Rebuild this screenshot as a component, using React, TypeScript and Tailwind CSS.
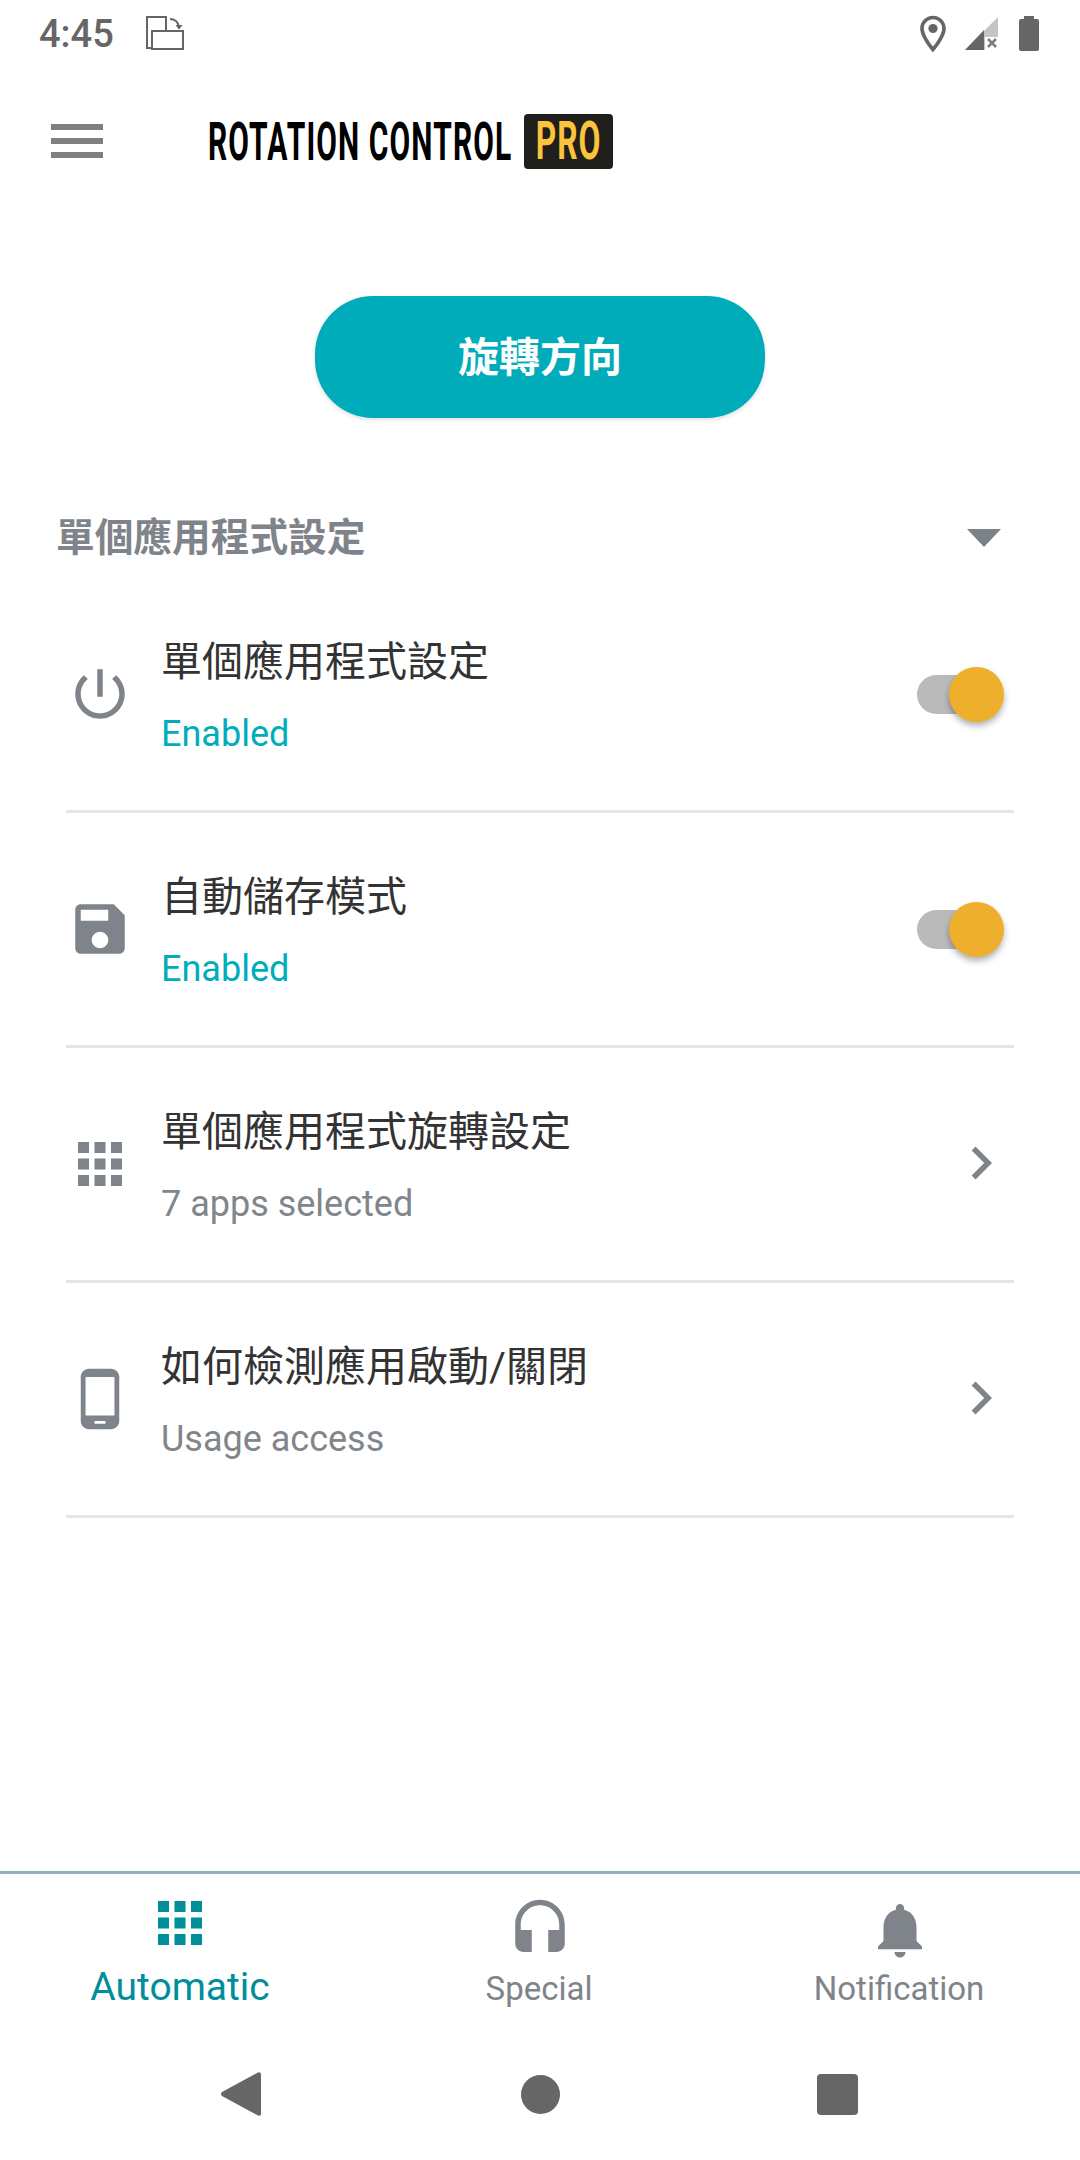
import type { ReactNode } from 'react'

const FONT = "font-['Roboto','Noto_Sans_CJK_TC',sans-serif]"

function Icon({ d, className, children }: { d?: string; className: string; children?: ReactNode }) {
  return (
    <svg viewBox="0 0 24 24" className={className} fill="currentColor">
      {d && <path d={d} />}
      {children}
    </svg>
  )
}

const APPS =
  'M4 8h4V4H4v4zm6 12h4v-4h-4v4zm-6 0h4v-4H4v4zm0-6h4v-4H4v4zm6 0h4v-4h-4v4zm6-10v4h4V4h-4zm-6 4h4V4h-4v4zm6 6h4v-4h-4v4zm0 6h4v-4h-4v4z'
const POWER =
  'M13 3h-2v10h2V3zm4.83 2.17l-1.42 1.42C17.99 7.86 19 9.81 19 12c0 3.87-3.13 7-7 7s-7-3.13-7-7c0-2.19 1.01-4.14 2.58-5.42L6.17 5.17C4.23 6.82 3 9.26 3 12c0 4.97 4.03 9 9 9s9-4.03 9-9c0-2.74-1.23-5.18-3.17-6.83z'
const SAVE =
  'M17 3H5c-1.11 0-2 .9-2 2v14c0 1.1.89 2 2 2h14c1.1 0 2-.9 2-2V7l-4-4zm-5 16c-1.66 0-3-1.34-3-3s1.34-3 3-3 3 1.34 3 3-1.34 3-3 3zm3-10H5V5h10v4z'
const PHONE =
  'M16 1H8C6.34 1 5 2.34 5 4v16c0 1.66 1.34 3 3 3h8c1.66 0 3-1.34 3-3V4c0-1.66-1.34-3-3-3zm-2 20h-4v-1h4v1zm3.25-3H6.75V4h10.5v14z'
const CHEVRON = 'M8.59 16.59L13.17 12 8.59 7.41 10 6l6 6-6 6-1.41-1.41z'
const HEADSET =
  'M12 1c-4.97 0-9 4.03-9 9v7c0 1.66 1.34 3 3 3h3v-8H5v-2c0-3.87 3.13-7 7-7s7 3.13 7 7v2h-4v8h3c1.66 0 3-1.34 3-3v-7c0-4.97-4.03-9-9-9z'
const BELL =
  'M12 22c1.1 0 2-.9 2-2h-4c0 1.1.89 2 2 2zm6-6v-5c0-3.07-1.64-5.64-4.5-6.32V4c0-.83-.67-1.5-1.5-1.5s-1.5.67-1.5 1.5v.68C7.63 5.36 6 7.92 6 11v5l-2 2v1h16v-1l-2-2z'

function StatusBar() {
  return (
    <div className="h-[63px] flex items-center pl-[39px] pr-[41px] text-[#666666]">
      <span className="text-[38px] leading-[63px] font-medium mt-[5px]">4:45</span>
      {/* auto-rotate indicator */}
      <svg viewBox="0 0 38 34" className="w-[38px] h-[34px] ml-[32px] mt-[3px]" fill="none" stroke="currentColor" strokeWidth="2">
        <path d="M5 32H1V1h19v14" />
        <rect x="6" y="15" width="31" height="18" />
        <path d="M24 3c5 0 8 3 9 8" />
        <path d="M30 9l3 4 3-4" fill="currentColor" strokeWidth="1" />
      </svg>
      <div className="ml-auto flex items-center">
        <svg viewBox="0 0 24 24" className="w-[44px] h-[44px] mt-[4px]" fill="currentColor">
          <path d="M12 2C8.13 2 5 5.13 5 9c0 5.25 7 13 7 13s7-7.75 7-13c0-3.87-3.13-7-7-7zM7 9c0-2.76 2.24-5 5-5s5 2.24 5 5c0 2.88-2.88 7.19-5 9.88C9.92 16.21 7 11.85 7 9z" />
          <circle cx="12" cy="9" r="2.5" />
        </svg>
        <svg viewBox="0 0 33 33" className="w-[33px] h-[33px] ml-[10px] mt-[4px]">
          <path d="M33 0V20H20V33H0Z" fill="#c4c4c4" />
          <path d="M19 13V33H0Z" fill="#666666" />
          <path d="M23 22l8 8M31 22l-8 8" stroke="#808080" strokeWidth="2.6" />
        </svg>
        <svg viewBox="0 0 20 35" className="w-[20px] h-[35px] ml-[21px] mt-[3px]" fill="currentColor">
          <path d="M5 0h10v3h3a2 2 0 0 1 2 2v28a2 2 0 0 1-2 2H2a2 2 0 0 1-2-2V5a2 2 0 0 1 2-2h3z" />
        </svg>
      </div>
    </div>
  )
}

function Header() {
  return (
    <div className="h-[156px] flex items-center pl-[51px]">
      <div className="w-[52px] flex flex-col gap-[8px]">
        <div className="h-[6px] bg-[#7f7f7f]" />
        <div className="h-[6px] bg-[#7f7f7f]" />
        <div className="h-[6px] bg-[#7f7f7f]" />
      </div>
      <div className="ml-[105px] flex items-center">
        {/* logo wordmark: squeezed, the inner box keeps its unscaled width */}
        <div className="w-[304px] pt-[2px]">
          <span className="block w-[540px] text-[53px] leading-none font-bold tracking-[2px] text-black whitespace-nowrap origin-left scale-x-[0.565]">
            ROTATION CONTROL
          </span>
        </div>
        <div className="ml-[12px] w-[89px] h-[55px] rounded-[4px] bg-[#211f1c] flex items-center justify-center">
          <span className="text-[53px] leading-none font-bold tracking-[1.5px] text-[#fbc43c] scale-x-[0.6]">PRO</span>
        </div>
      </div>
    </div>
  )
}

function Toggle() {
  return (
    <div className="relative w-[87px] h-[55px] flex items-center">
      <div className="w-[69px] h-[39px] rounded-full bg-[#bababa]" />
      <div className="absolute right-0 top-0 w-[55px] h-[55px] rounded-full bg-[#eeb02c] shadow-[0_4px_6px_rgba(0,0,0,0.3)]" />
    </div>
  )
}

type RowProps = { icon: string; title: string; sub: string; accent?: boolean; right: ReactNode }

function Row({ icon, title, sub, accent, right }: RowProps) {
  return (
    <div className="h-[235px] border-b-[3px] border-[#e5e5e5] flex items-center pl-px">
      <Icon d={icon} className="w-[66px] h-[66px] text-[#7f848a] shrink-0" />
      <div className="ml-[28px] pt-[8px] flex flex-col">
        <span className="text-[41px] leading-[50px] text-[#333333]">{title}</span>
        <span className={`text-[36px] leading-[50px] mt-[22px] ${accent ? 'text-[#00adbb]' : 'text-[#80868c]'}`}>{sub}</span>
      </div>
      <div className="ml-auto">{right}</div>
    </div>
  )
}

function RightToggle() {
  return (
    <div className="mr-[10px]">
      <Toggle />
    </div>
  )
}

function RightChevron() {
  return <Icon d={CHEVRON} className="w-[66px] h-[66px] mb-[3px] text-[#7f848a]" />
}

function Tab({ icon, label, active }: { icon: string; label: string; active?: boolean }) {
  if (active) {
    return (
      <div className="flex-1 flex flex-col items-center pt-[16px] text-[#008e9b]">
        <Icon d={icon} className="w-[66px] h-[66px]" />
        <span className="text-[39px] leading-[46px] mt-[8px]">{label}</span>
      </div>
    )
  }
  return (
    <div className="flex-1 flex flex-col items-center pt-[23px] text-[#7f848a]">
      <Icon d={icon} className="w-[66px] h-[66px]" />
      <span className="text-[33px] leading-[40px] mt-[6px] mr-[2px]">{label}</span>
    </div>
  )
}

function NavBar() {
  return (
    <div className="h-[132px] flex items-center justify-center text-[#666666]">
      <svg viewBox="0 0 40 46" className="w-[40px] h-[46px]" fill="currentColor">
        <path d="M37 1.5a2 2 0 0 1 3 1.5v40a2 2 0 0 1-3 1.5L1 25a2.5 2.5 0 0 1 0-4z" />
      </svg>
      <div className="ml-[260px] w-[39px] h-[39px] rounded-full bg-[#666666]" />
      <div className="ml-[257px] mr-[2px] w-[41px] h-[41px] rounded-[4px] bg-[#666666]" />
    </div>
  )
}

export default function App() {
  return (
    <div className={`h-[2160px] w-[1080px] bg-white flex flex-col ${FONT}`}>
      <StatusBar />
      <Header />

      <button className="self-center mt-[77px] w-[450px] h-[122px] pt-[3px] rounded-[58px] bg-[#00acba] text-white text-[41px] font-bold shadow-[0_2px_4px_rgba(0,0,0,0.12)]">
        旋轉方向
      </button>

      <div className="mt-[82px] h-[76px] flex items-center justify-between pl-[56px] pr-[79px]">
        <span className="text-[38.7px] font-bold text-[#7f848a]">單個應用程式設定</span>
        <div className="w-0 h-0 border-l-[17.5px] border-r-[17.5px] border-t-[18px] border-l-transparent border-r-transparent border-t-[#7c8289]" />
      </div>

      <div className="mx-[66px] pt-[2px]">
        <Row icon={POWER} title="單個應用程式設定" sub="Enabled" accent right={<RightToggle />} />
        <Row icon={SAVE} title="自動儲存模式" sub="Enabled" accent right={<RightToggle />} />
        <Row icon={APPS} title="單個應用程式旋轉設定" sub="7 apps selected" right={<RightChevron />} />
        <Row icon={PHONE} title="如何檢測應用啟動/關閉" sub="Usage access" right={<RightChevron />} />
      </div>

      <div className="mt-auto h-[157px] border-t-[3px] border-[#8fb3b9] flex">
        <Tab icon={APPS} label="Automatic" active />
        <Tab icon={HEADSET} label="Special" />
        <Tab icon={BELL} label="Notification" />
      </div>
      <NavBar />
    </div>
  )
}
